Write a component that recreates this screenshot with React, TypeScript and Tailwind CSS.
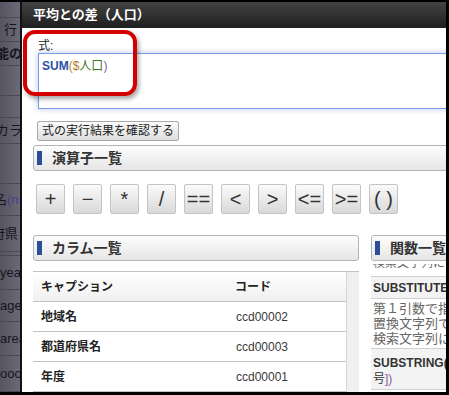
const FONT = { fontFamily: '"Liberation Sans", "Noto Sans CJK JP", sans-serif' };

const stripRows = [
  { h: 16, t: '' },
  { h: 24, t: '行', cls: 'ml-[4px]' },
  { h: 24, t: '能の', cls: '-ml-[4px] font-bold' },
  { h: 30, t: '' },
  { h: 22, t: '' },
  { h: 26, t: 'カラム', cls: '-ml-[4px]' },
  { h: 40, t: '' },
  { h: 32, t: '名(n', cls: '-ml-[6px]' },
  { h: 36, t: '府県', cls: '-ml-[8px]' },
  { h: 4, t: '' },
  { h: 34, t: 'year', cls: 'ml-[0px]' },
  { h: 32, t: 'age', cls: 'ml-[0px]' },
  { h: 34, t: 'area', cls: 'ml-[0px]' },
  { h: 36, t: 'ooo', cls: 'ml-[0px]' },
];

const ops = ['+', '−', '*', '/', '==', '<', '>', '<=', '>=', '( )'];

const rows = [
  ['地域名', 'ccd00002'],
  ['都道府県名', 'ccd00003'],
  ['年度', 'ccd00001'],
];

function SectionHeader({ title, className }: { title: string; className?: string }) {
  return (
    <div
      className={`flex h-[26px] items-center rounded-[3px] border border-[#b4b4b4] bg-gradient-to-b from-[#fdfdfd] to-[#e6e6e6] ${className ?? ''}`}
    >
      <span className="ml-[3px] h-[14px] w-[5px] bg-[#2c4e96]" />
      <span className="ml-[10px] text-[14px] font-bold text-[#333]">{title}</span>
    </div>
  );
}

export default function App() {
  return (
    <div className="flex h-[395px] w-[449px] overflow-hidden bg-black pt-[2px] pr-[3px] pb-[3px]" style={FONT}>
      {/* 背後のページ */}
      <div className="flex w-[20px] flex-col overflow-hidden bg-gradient-to-r from-[#55545f] to-[#6a6978]">
        {stripRows.map((r, i) => (
          <div
            key={i}
            style={{ height: r.h }}
            className="flex shrink-0 items-center border-b border-[#4a4955] whitespace-nowrap text-[13px] text-[#15151c]"
          >
            {r.t === '名(n' ? (
              <span className={r.cls}>
                名<span className="text-[#4b3a8a]">(n</span>
              </span>
            ) : (
              <span className={r.cls}>{r.t}</span>
            )}
          </div>
        ))}
      </div>
      <div className="w-[2px] bg-[#111]" />

      {/* ダイアログ */}
      <div className="relative flex flex-1 flex-col overflow-hidden bg-white">
        <div className="flex h-[26px] shrink-0 items-center bg-gradient-to-b from-[#434343] to-[#1f1f1f] pl-[11px] text-[13px] font-bold text-white">
          平均との差（人口）
        </div>

        <div className="flex w-[600px] flex-col pl-[11px]">
          <div className="mt-[12px] ml-[5px] h-[13px] text-[12px] leading-[13px] text-[#222]">式:</div>
          <div className="ml-[5px] h-[56px] border border-[#7c9be6] bg-white px-[3px] pt-[3px] text-[12px] shadow-[0_0_5px_1px_rgba(140,165,235,0.45)]">
            <span className="font-bold text-[#2b4fa6]">SUM</span>
            <span className="text-[#c08a2e]">(</span>
            <span className="text-[#b07a28]">$</span>
            <span className="text-[#3b7a1c]">人口</span>
            <span className="text-[#8a5a9c]">)</span>
          </div>

          <button className="mt-[12px] ml-[4px] flex h-[20px] w-[142px] items-center justify-center rounded-[2px] border border-[#a8a8a8] bg-gradient-to-b from-[#fbfbfb] to-[#dedede] text-[12px] text-[#222]">
            式の実行結果を確認する
          </button>

          <SectionHeader title="演算子一覧" className="mt-[4px] w-[560px]" />

          <div className="mt-[13px] ml-[3px] flex gap-[8px]">
            {ops.map((o) => (
              <div
                key={o}
                className="flex h-[30px] w-[29px] items-center justify-center rounded-[2px] border border-[#c4c4c4] bg-gradient-to-b from-[#fafafa] to-[#d9d9d9] text-[20px] text-[#333]"
              >
                {o}
              </div>
            ))}
          </div>

          <div className="mt-[21px] flex gap-[12px]">
            {/* カラム一覧 */}
            <div className="flex w-[326px] flex-col">
              <SectionHeader title="カラム一覧" />
              <div className="mt-[10px] flex border-t border-[#c2c2c2]">
                <div className="flex w-[313px] flex-col">
                  <div className="flex h-[30px] items-center border-b border-[#c2c2c2] bg-gradient-to-b from-white to-[#f0f0f0] text-[12px] font-bold text-[#222]">
                    <span className="w-[202px] pl-[8px]">キャプション</span>
                    <span>コード</span>
                  </div>
                  {rows.map(([cap, code]) => (
                    <div key={code} className="flex h-[30px] items-center border-b border-[#c2c2c2] bg-white text-[12px]">
                      <span className="w-[203px] pl-[8px] font-bold text-[#222]">{cap}</span>
                      <span className="text-[#3a3a3a]">{code}</span>
                    </div>
                  ))}
                </div>
                <div className="w-[13px] border-l border-[#d6d6d6] bg-[#efefef]" />
              </div>
            </div>

            {/* 関数一覧 */}
            <div className="flex w-[220px] flex-col">
              <SectionHeader title="関数一覧" />
              <div className="mt-[3px] h-[127px] overflow-hidden">
                <div className="-mt-[10px] flex flex-col text-[12px]">
                  <div className="h-[23px] border-b border-[#d0d0d0] pt-[2px] pl-[2px] leading-[15px] text-[#666]">
                    検索文字列に一致する文字
                  </div>
                  <div className="flex h-[22px] items-center border-b border-[#d0d0d0] bg-[#f3f3f3] pl-[2px] font-bold text-[#333]">
                    SUBSTITUTE(文字列,検索文字列)
                  </div>
                  <div className="border-b border-[#d0d0d0] py-[2px] pl-[2px] text-[13px] leading-[15px] text-[#666]">
                    <div>第１引数で指定した文字列の</div>
                    <div>置換文字列で置き換えます。</div>
                    <div>検索文字列に一致するもの</div>
                  </div>
                  <div className="border-b border-[#d0d0d0] bg-[#f3f3f3] pt-[6px] pb-[2px] pl-[2px] leading-[16px] font-bold text-[#333]">
                    <div>SUBSTRING(文字列,開始位置[,文字</div>
                    <div className="font-normal">
                      号<span className="text-[#8a5a9c]">])</span>
                    </div>
                  </div>
                </div>
              </div>
            </div>
          </div>
        </div>

        {/* 赤い強調枠 */}
        <div className="pointer-events-none absolute top-[28px] left-[1px] h-[66px] w-[114px] rounded-[12px] border-[4px] border-[#d40000] shadow-[2px_3px_4px_rgba(0,0,0,0.35)]" />
      </div>
    </div>
  );
}
